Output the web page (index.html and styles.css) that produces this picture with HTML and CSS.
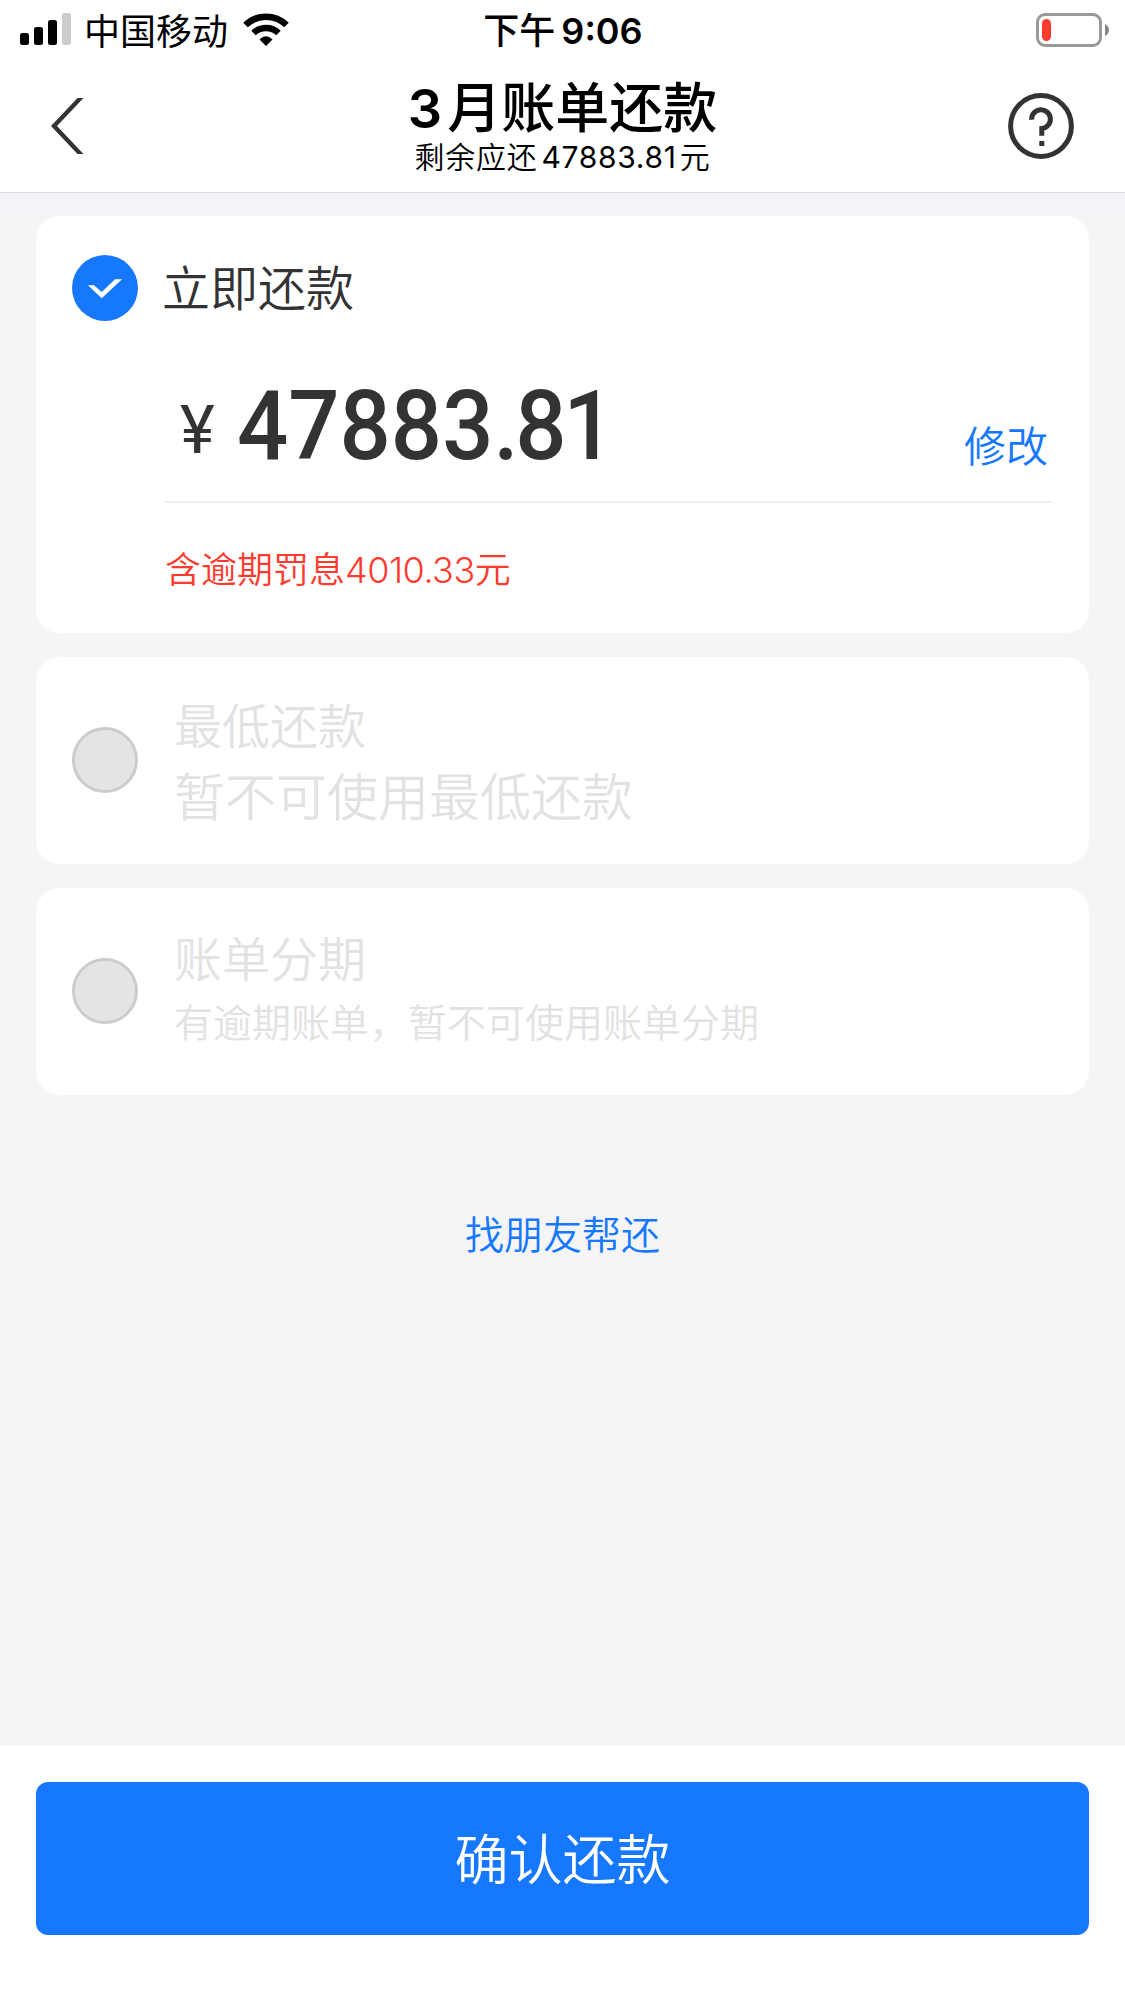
FILE: index.html
```html
<!DOCTYPE html>
<html lang="zh">

<head>
  <meta charset="UTF-8">
  <title>3月账单还款</title>
  <link rel="stylesheet" href="styles.css">
</head>

<body>
  <!-- 状态栏 -->
  <div class="status">
    <div class="carrier">
      <svg class="signal" width="52" height="34" viewBox="0 0 52 34">
        <rect x="0" y="20" width="9" height="12" rx="2.5" />
        <rect x="14" y="14" width="9" height="18" rx="2.5" />
        <rect x="28" y="7" width="9" height="25" rx="2.5" />
        <rect x="42" y="0" width="9" height="32" rx="2.5" fill="#ccc" />
      </svg>
      <span>中国移动</span>
      <svg class="wifi" width="46" height="34" viewBox="0 0 46 34">
        <path d="M2.5 12A29.5 29.5 0 0 1 43.5 12" fill="none" stroke="#000" stroke-width="6.6" />
        <path d="M10.5 20A18 18 0 0 1 35.5 20" fill="none" stroke="#000" stroke-width="6.4" />
        <path d="M23 33L16.5 26.5Q23 20 29.5 26.5Z" />
      </svg>
    </div>
    <div class="time">下午<span class="clock">9:06</span></div>
    <div class="power">
      <div class="battery">
        <div class="level"></div>
      </div>
      <svg width="4" height="12" viewBox="0 0 4 12">
        <path d="M0 0Q4 2 4 6T0 12Z" fill="#888" />
      </svg>
    </div>
  </div>

  <!-- 导航栏 -->
  <header class="nav">
    <svg class="back" width="34" height="56" viewBox="0 0 34 56">
      <path d="M26.5 0H32.5L6 28L32.5 56H26.5L0 28Z" fill="#333" />
    </svg>
    <div class="nav-text">
      <h1><span class="num">3</span>月账单还款</h1>
      <p>剩余应还<span class="num">47883.81</span>元</p>
    </div>
    <svg class="help" width="66" height="66" viewBox="0 0 66 66" fill="none" stroke="#333">
      <circle cx="33" cy="33" r="30.4" stroke-width="5" />
      <path d="M23.6 26.8A9.4 9.4 0 1 1 33.8 35.5V42.8" stroke-width="5" />
      <path d="M33.8 48V53" stroke-width="5" />
    </svg>
  </header>

  <main class="content">
    <section class="card pay">
      <div class="option">
        <svg class="radio" width="66" height="66" viewBox="0 0 66 66">
          <circle cx="33" cy="33" r="33" fill="#1677ff" />
          <path d="M16 30.3H22L29.7 37L43 24.3H50L29.7 43.3Z" fill="#fff" />
        </svg>
        <h2>立即还款</h2>
      </div>
      <div class="amount">
        <span class="symbol">¥</span>
        <span class="value">47883<span class="cents">.81</span></span>
        <a class="edit">修改</a>
      </div>
      <p class="overdue">含逾期罚息<span class="num">4010.33</span>元</p>
    </section>

    <section class="card disabled min">
      <div class="radio-off"></div>
      <div class="info">
        <h2>最低还款</h2>
        <p>暂不可使用最低还款</p>
      </div>
    </section>

    <section class="card disabled stage">
      <div class="radio-off"></div>
      <div class="info">
        <h2>账单分期</h2>
        <p>有逾期账单，暂不可使用账单分期</p>
      </div>
    </section>

    <a class="friend">找朋友帮还</a>
  </main>

  <footer class="bottom">
    <button class="confirm">确认还款</button>
  </footer>
</body>

</html>
```

FILE: styles.css
```css
* {
  box-sizing: border-box;
  margin: 0;
  padding: 0;
}

body {
  display: flex;
  flex-direction: column;
  width: 1125px;
  height: 2001px;
  background-color: #f5f5f5;
  color: #333;
  font-family: Inter, "Noto Sans CJK SC", sans-serif;
  font-weight: 350;
  overflow: hidden;
}

svg {
  display: block;
  flex: none;
}

.status {
  display: grid;
  grid-template-columns: 1fr auto 1fr;
  align-items: center;
  height: 60px;
  padding: 0 16px 0 20px;
  background-color: #fff;
  color: #000;
  font-size: 36px;
  line-height: 60px;
}

.carrier {
  display: flex;
  align-items: center;
  font-weight: 400;
}

.carrier span {
  margin-left: 12px;
  padding-top: 4px;
  line-height: 56px;
}

.wifi {
  margin-left: 15px;
}

.time {
  padding-top: 3px;
  font-weight: 500;
  line-height: 57px;
}

.clock {
  margin: 0 3px 0 6px;
  font-weight: 600;
}

.power {
  display: flex;
  align-items: center;
  justify-content: flex-end;
  gap: 3px;
}

.battery {
  width: 66px;
  height: 34px;
  padding: 3px;
  border: 3px solid #999;
  border-radius: 9px;
}

.level {
  width: 9px;
  height: 22px;
  border-radius: 4.5px;
  background-color: #ff3b30;
}

.nav {
  display: grid;
  grid-template-columns: 1fr auto 1fr;
  align-items: center;
  height: 133px;
  padding: 0 51px;
  background-color: #fff;
  border-bottom: 1px solid #dcdce0;
  color: #000;
}

.help {
  justify-self: end;
}

.nav-text {
  text-align: center;
}

.nav-text h1 {
  font-size: 54px;
  font-weight: 500;
  line-height: 64px;
}

.nav-text h1 .num {
  margin-right: 5px;
  font-weight: 600;
}

.nav-text p {
  padding-bottom: 2px;
  font-size: 30px;
  line-height: 32px;
  letter-spacing: 0.7px;
}

.nav-text p .num {
  margin: 0 3px 0 4px;
  font-weight: 400;
}

.content {
  display: flex;
  flex-direction: column;
  flex: 1;
  align-items: center;
  border-top: 23px solid #f3f3f8;
}

.card {
  width: 1053px;
  margin-bottom: 24px;
  border-radius: 24px;
  background-color: #fff;
}

.card h2 {
  font-size: 48px;
  font-weight: 350;
}

.pay {
  height: 417px;
  padding: 39px 36px 0;
}

.option {
  display: flex;
  align-items: center;
  gap: 24px;
  height: 66px;
}

.option h2 {
  padding-bottom: 6px;
}

.amount {
  display: flex;
  height: 182px;
  margin-left: 93px;
  border-bottom: 2px solid #f0f0f0;
  font-family: Roboto, sans-serif;
}

.symbol {
  margin-left: 15px;
  font-size: 66px;
  font-weight: 400;
  line-height: 220px;
}

/* 金额数字略窄 */
.value {
  margin-left: 22px;
  font-size: 96px;
  font-weight: 500;
  line-height: 210px;
  letter-spacing: 0;
  transform: scaleX(0.94);
  transform-origin: left;
}

.cents {
  letter-spacing: -3.5px;
}

.edit {
  margin-left: auto;
  margin-right: 5px;
  color: #1677ff;
  font-family: "Noto Sans CJK SC", sans-serif;
  font-size: 42px;
  line-height: 246px;
}

.overdue {
  margin-left: 93px;
  color: #ff3b30;
  font-size: 36px;
  line-height: 134px;
}

.overdue .num {
  letter-spacing: -0.5px;
}

.disabled {
  display: flex;
  align-items: center;
  height: 207px;
  padding: 0 36px 1px;
  color: #e2e2e2;
}

.radio-off {
  width: 66px;
  height: 66px;
  border: 3px solid #ccc;
  border-radius: 50%;
  background-color: #e4e4e4;
}

.info {
  margin-left: 36px;
}

.info h2 {
  line-height: 70px;
}

.min .info {
  padding-top: 5px;
}

.min p {
  font-size: 51px;
  line-height: 71px;
}

.stage .info {
  padding-bottom: 6px;
}

.stage p {
  font-size: 39px;
  line-height: 56px;
}

.friend {
  margin-top: 87px;
  color: #1677ff;
  font-size: 39px;
  line-height: 58px;
}

.bottom {
  height: 255px;
  padding: 36px 36px 0;
  background-color: #fff;
}

.confirm {
  width: 100%;
  height: 153px;
  padding-bottom: 5px;
  border: none;
  border-radius: 12px;
  background-color: #1677ff;
  color: #fff;
  font-family: "Noto Sans CJK SC", sans-serif;
  font-size: 54px;
  font-weight: 350;
}
```
